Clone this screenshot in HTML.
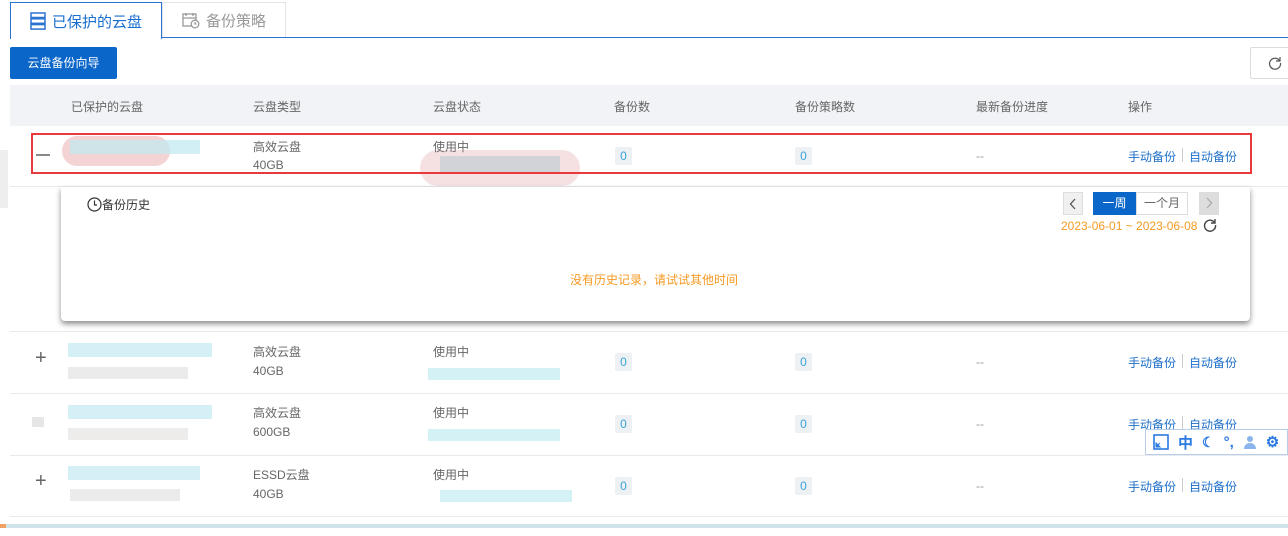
<!DOCTYPE html>
<html><head><meta charset="utf-8"><style>
*{margin:0;padding:0;box-sizing:border-box}
body{width:1288px;height:536px;overflow:hidden;background:#fff;font-family:"Liberation Sans","Noto Sans CJK SC",sans-serif;font-size:12px;color:#333;position:relative}
.a{position:absolute}
.tab{position:absolute;top:2px;height:36px;border:1px solid #e2e4e8;border-bottom:none;font-size:15px;display:flex;align-items:center;justify-content:center;gap:6px}
.g{color:#666}
.badge{position:absolute;width:17px;height:18px;background:#eef1f4;color:#38a3d8;text-align:center;line-height:18px;font-size:12px;border-radius:2px}
.lnk{position:absolute;color:#1e6fc8;font-size:12px}
.hl{position:absolute;left:10px;width:1278px;height:1px;background:#e8eaee}
.blur{position:absolute;opacity:.75}
</style></head><body>
<div class="tab" style="left:10px;width:152px;color:#1a6fd0;background:#fff;border-color:#2a74d0;height:37px;z-index:2">
<svg width="16" height="18" viewBox="0 0 16 18"><g fill="none" stroke="#2a74d0" stroke-width="1.5"><rect x="1" y="1" width="14" height="4.5"/><rect x="1" y="6.8" width="14" height="4.5"/><rect x="1" y="12.6" width="14" height="4.5"/></g></svg>已保护的云盘</div>
<div class="tab" style="left:162px;width:124px;color:#999;background:#fff">
<svg width="18" height="17" viewBox="0 0 18 17"><g fill="none" stroke="#999" stroke-width="1.3"><rect x="1" y="2" width="13" height="12"/><path d="M1 6h13M4 1v3M11 1v3"/><circle cx="13" cy="12" r="3.8" fill="#fff"/><path d="M13 10v2h1.5"/></g></svg>备份策略</div>
<div class="a" style="left:10px;top:37px;width:1278px;height:1px;background:#2a74d0"></div>
<div class="a" style="left:10px;top:47px;width:107px;height:32px;background:#0b66c9;color:#fff;border-radius:2px;text-align:center;line-height:32px;font-size:12px">云盘备份向导</div>
<div class="a" style="left:1250px;top:47px;width:40px;height:32px;border:1px solid #d9dce1;border-radius:2px"><svg class="a" style="left:17px;top:8px" width="14" height="14" viewBox="0 0 14 14"><path d="M11.5 4.5A5.5 5.5 0 1 0 12.5 7" fill="none" stroke="#555" stroke-width="1.2"/><path d="M12 1v4H8" fill="none" stroke="#555" stroke-width="1.2"/></svg></div>
<div class="a" style="left:10px;top:85px;width:1278px;height:41px;background:#f1f3f6"></div>
<div class="a g" style="left:71px;top:98px">已保护的云盘</div>
<div class="a g" style="left:253px;top:98px">云盘类型</div>
<div class="a g" style="left:433px;top:98px">云盘状态</div>
<div class="a g" style="left:614px;top:98px">备份数</div>
<div class="a g" style="left:795px;top:98px">备份策略数</div>
<div class="a g" style="left:976px;top:98px">最新备份进度</div>
<div class="a g" style="left:1128px;top:98px">操作</div>
<div class="a" style="left:0;top:150px;width:8px;height:58px;background:#eee"></div>
<!-- row1 -->
<div class="blur" style="left:62px;top:136px;width:108px;height:30px;background:#f0c4c6;border-radius:20px"></div>
<div class="blur" style="left:70px;top:140px;width:130px;height:14px;background:#c2e9f0"></div>
<div class="blur" style="left:420px;top:150px;width:160px;height:36px;background:#f2d6d8;border-radius:18px"></div>
<div class="blur" style="left:440px;top:156px;width:120px;height:16px;background:#c5cdd6"></div>
<div class="a" style="left:31px;top:133px;width:1221px;height:41px;border:2px solid #e83a3a"></div>
<div class="a" style="left:36px;top:154px;width:14px;height:2px;background:#888"></div>
<div class="a g" style="left:253px;top:138px">高效云盘</div><div class="a g" style="left:253px;top:158px">40GB</div>
<div class="a g" style="left:433px;top:138px">使用中</div>
<div class="badge" style="left:615px;top:147px">0</div><div class="badge" style="left:795px;top:147px">0</div>
<div class="a" style="left:976px;top:149px;color:#999">--</div>
<div class="lnk" style="left:1128px;top:148px">手动备份</div><div class="a" style="left:1182px;top:148px;width:1px;height:14px;background:#ccc"></div><div class="lnk" style="left:1189px;top:148px">自动备份</div>
<div class="hl" style="top:186px"></div>
<!-- panel -->
<div class="a" style="left:61px;top:187px;width:1189px;height:134px;background:#fff;border-radius:0 0 4px 4px;box-shadow:0 3px 6px rgba(0,0,0,.45)"></div>
<div class="a" style="left:87px;top:196px;font-size:12px;color:#333;display:flex;align-items:center"><svg width="15" height="15" viewBox="0 0 15 15"><circle cx="7.5" cy="7.5" r="6.5" fill="none" stroke="#333" stroke-width="1.2"/><path d="M7.5 3.5v4.5h2.5" fill="none" stroke="#333" stroke-width="1.2"/></svg>备份历史</div>
<div class="a" style="left:1063px;top:192px;width:20px;height:23px;background:#f0f0f0;border:1px solid #ddd"><svg class="a" style="left:5px;top:5px" width="8" height="12" viewBox="0 0 8 12"><path d="M6 1L1.5 6 6 11" fill="none" stroke="#555" stroke-width="1.3"/></svg></div>
<div class="a" style="left:1093px;top:192px;width:43px;height:23px;background:#0b66c9;color:#fff;text-align:center;line-height:23px">一周</div>
<div class="a" style="left:1136px;top:192px;width:52px;height:23px;border:1px solid #ddd;color:#666;text-align:center;line-height:21px">一个月</div>
<div class="a" style="left:1199px;top:192px;width:20px;height:23px;background:#ddd"><svg class="a" style="left:6px;top:5px" width="8" height="12" viewBox="0 0 8 12"><path d="M2 1l4.5 5L2 11" fill="none" stroke="#aaa" stroke-width="1.3"/></svg></div>
<div class="a" style="left:1061px;top:219px;color:#f59a23;font-size:12px">2023-06-01 ~ 2023-06-08</div>
<svg class="a" style="left:1203px;top:218px" width="14" height="14" viewBox="0 0 14 14"><path d="M11.5 4.5A5.5 5.5 0 1 0 12.5 7" fill="none" stroke="#444" stroke-width="1.4"/><path d="M12 1v4H8" fill="none" stroke="#444" stroke-width="1.4"/></svg>
<div class="a" style="left:570px;top:271px;color:#f59a23;font-size:12px">没有历史记录，请试试其他时间</div>
<div class="hl" style="top:331px"></div>
<!-- rows -->
<div class="a" style="left:35px;top:347px;font-size:20px;color:#666;font-weight:300">+</div>
<div class="blur" style="left:68px;top:343px;width:144px;height:14px;background:#c6eaf2"></div>
<div class="blur" style="left:68px;top:367px;width:120px;height:12px;background:#e4e4e4"></div>
<div class="blur" style="left:428px;top:368px;width:132px;height:12px;background:#c5ecf3"></div>
<div class="a g" style="left:253px;top:343px">高效云盘</div><div class="a g" style="left:253px;top:364px">40GB</div>
<div class="a g" style="left:433px;top:343px">使用中</div>
<div class="badge" style="left:615px;top:353px">0</div><div class="badge" style="left:795px;top:353px">0</div>
<div class="a" style="left:976px;top:355px;color:#999">--</div>
<div class="lnk" style="left:1128px;top:354px">手动备份</div><div class="a" style="left:1182px;top:354px;width:1px;height:14px;background:#ccc"></div><div class="lnk" style="left:1189px;top:354px">自动备份</div>
<div class="hl" style="top:393px"></div>
<div class="blur" style="left:32px;top:417px;width:12px;height:10px;background:#ddd"></div>
<div class="blur" style="left:68px;top:405px;width:144px;height:14px;background:#c6eaf2"></div>
<div class="blur" style="left:68px;top:428px;width:120px;height:12px;background:#e8e4e4"></div>
<div class="blur" style="left:428px;top:429px;width:132px;height:12px;background:#c5ecf3"></div>
<div class="a g" style="left:253px;top:404px">高效云盘</div><div class="a g" style="left:253px;top:425px">600GB</div>
<div class="a g" style="left:433px;top:404px">使用中</div>
<div class="badge" style="left:615px;top:415px">0</div><div class="badge" style="left:795px;top:415px">0</div>
<div class="a" style="left:976px;top:417px;color:#999">--</div>
<div class="lnk" style="left:1128px;top:416px">手动备份</div><div class="a" style="left:1182px;top:416px;width:1px;height:14px;background:#ccc"></div><div class="lnk" style="left:1189px;top:416px">自动备份</div>
<div class="hl" style="top:455px"></div>
<div class="a" style="left:35px;top:470px;font-size:20px;color:#666;font-weight:300">+</div>
<div class="blur" style="left:68px;top:466px;width:132px;height:14px;background:#c6eaf2"></div>
<div class="blur" style="left:70px;top:489px;width:110px;height:12px;background:#e4e4e4"></div>
<div class="blur" style="left:440px;top:490px;width:132px;height:12px;background:#c5ecf3"></div>
<div class="a g" style="left:253px;top:466px">ESSD云盘</div><div class="a g" style="left:253px;top:487px">40GB</div>
<div class="a g" style="left:433px;top:466px">使用中</div>
<div class="badge" style="left:615px;top:477px">0</div><div class="badge" style="left:795px;top:477px">0</div>
<div class="a" style="left:976px;top:479px;color:#999">--</div>
<div class="lnk" style="left:1128px;top:478px">手动备份</div><div class="a" style="left:1182px;top:478px;width:1px;height:14px;background:#ccc"></div><div class="lnk" style="left:1189px;top:478px">自动备份</div>
<div class="hl" style="top:516px"></div>
<div class="a" style="left:0;top:524px;width:1288px;height:4px;background:#cfe3ea"></div>
<div class="a" style="left:0;top:524px;width:6px;height:4px;background:#f0a060"></div>
<!-- IME bar -->
<div class="a" style="left:1145px;top:429px;width:143px;height:26px;background:#fff;border:1px solid #b8cdea;display:flex;align-items:center;gap:9px;padding-left:7px;color:#2a7ae2;font-size:15px;font-weight:bold">
<svg width="16" height="16" viewBox="0 0 16 16"><rect x="1" y="1" width="14" height="14" fill="none" stroke="#2a7ae2" stroke-width="1.6"/><path d="M3 13l4-4M3 13v-4l4 4z" fill="#2a7ae2" stroke="#2a7ae2"/></svg>
<span>中</span><span style="font-size:14px">&#9790;</span><span>°,</span>
<svg width="14" height="14" viewBox="0 0 14 14"><circle cx="7" cy="4" r="3" fill="#8ab4ec"/><path d="M1 14c0-4 3-6 6-6s6 2 6 6z" fill="#8ab4ec"/></svg><span>&#9881;</span></div>
</body></html>
